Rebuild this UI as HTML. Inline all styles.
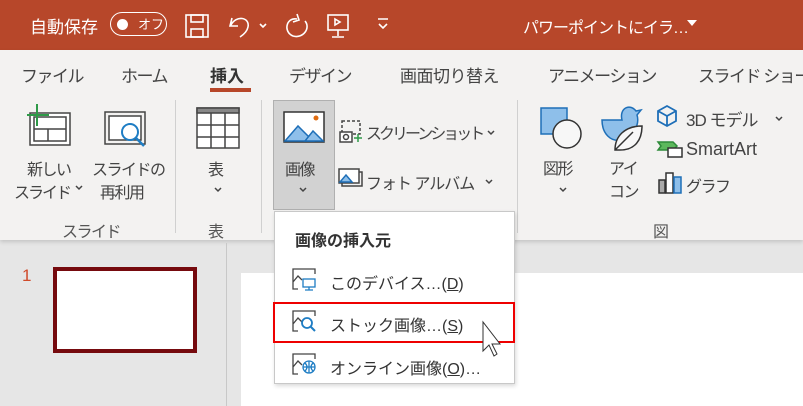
<!DOCTYPE html>
<html><head><meta charset="utf-8"><style>
*{margin:0;padding:0;box-sizing:border-box}
body{width:803px;height:406px;overflow:hidden;position:relative;background:#e6e6e6;font-family:"Liberation Sans","Noto Sans CJK JP",sans-serif;color:#333}
.a{position:absolute;white-space:nowrap}
.t{font-size:16px;color:#444;letter-spacing:-1.5px}
.w{color:#fff}
svg{position:absolute;overflow:visible}
</style></head><body>
<div class="a" style="left:0;top:0;width:803px;height:50px;background:#b7472a"></div>
<div class="a w" style="left:30px;top:13px;font-size:17px">自動保存</div>
<div class="a" style="left:110px;top:12px;width:57px;height:24px;border:1.5px solid #fff;border-radius:12px"></div>
<div class="a" style="left:117px;top:19px;width:11px;height:11px;border-radius:50%;background:#fff"></div>
<div class="a w" style="left:138px;top:14px;font-size:13px">オフ</div>
<svg width="803" height="50" style="left:0;top:0" fill="none" stroke="#fff" stroke-width="1.6">
<rect x="186" y="15" width="22" height="22"/><rect x="191" y="15" width="12" height="7"/><rect x="191" y="29" width="12" height="8"/>
<path d="M232 18 L230 26 L238 26 M231 25 C236 15 250 17 248 27 C247 32 243 35 240 37"/><path d="M260 24 l3 3 l3 -3"/>
<path d="M297 19 C286 17 283 32 293 36 C303 39 311 28 305 21 M297 14 l2 6 l-6 2"/>
<rect x="328" y="15" width="20" height="15"/><path d="M338 30 v6 M332 37 h12 M335 19 l5 3 l-5 3z"/>
<path d="M378 19 h10 M379 24 l4 4 l4 -4"/>
<path d="M687 20 h10 l-5 6z" fill="#fff" stroke="none"/>
</svg>
<div class="a w" style="left:523px;top:14px;font-size:16px;letter-spacing:-1px">パワーポイントにイラ…</div>

<div class="a" style="left:0;top:50px;width:803px;height:190px;background:#f3f2f1;box-shadow:0 2px 4px rgba(0,0,0,.15)"></div>
<div class="a t" style="left:21px;top:62px;font-size:17px">ファイル</div>
<div class="a t" style="left:121px;top:62px;font-size:17px">ホーム</div>
<div class="a t" style="left:210px;top:62px;font-weight:bold;color:#333;font-size:17px;letter-spacing:0">挿入</div>
<div class="a" style="left:210px;top:88px;width:41px;height:4px;background:#b7472a"></div>
<div class="a t" style="left:289px;top:62px;font-size:17px">デザイン</div>
<div class="a t" style="left:400px;top:62px;font-size:17px;letter-spacing:-0.5px">画面切り替え</div>
<div class="a t" style="left:548px;top:62px;font-size:17px">アニメーション</div>
<div class="a t" style="left:698px;top:62px;font-size:17px">スライド ショー</div>

<div class="a" style="left:175px;top:100px;width:1px;height:133px;background:#d0d0d0"></div>
<div class="a" style="left:261px;top:100px;width:1px;height:133px;background:#d0d0d0"></div>
<div class="a" style="left:517px;top:100px;width:1px;height:133px;background:#d0d0d0"></div>
<div class="a" style="left:273px;top:100px;width:62px;height:110px;background:#d2d2d2;border:1px solid #b0b0b0"></div>

<svg width="803" height="240" style="left:0;top:0" fill="none" stroke-width="1.5">
<rect x="30" y="113" width="40" height="32" stroke="#444" fill="#fff"/><rect x="34" y="117" width="32" height="24" stroke="#444"/><path d="M34 129 h32 M48 129 v12" stroke="#444"/>
<path d="M37 104 v22 M27 115 h22" stroke="#2e9a48" stroke-width="2"/>
<rect x="105" y="112" width="40" height="32" stroke="#444"/><rect x="109" y="116" width="32" height="24" stroke="#444" fill="#fff"/><circle cx="130" cy="132" r="8" stroke="#1e7dc4" stroke-width="2"/><path d="M136 138 l8 8" stroke="#1e7dc4" stroke-width="2.5"/>
<rect x="197" y="108" width="42" height="40" stroke="#444" fill="#fff"/><rect x="197" y="108" width="42" height="5" fill="#888" stroke="#444"/><path d="M211 113 v35 M225 113 v35 M197 125 h42 M197 137 h42" stroke="#444"/>
<rect x="284" y="112" width="40" height="30" stroke="#333" fill="#fff"/><path d="M285 141 L298 126 L313 141z" fill="#8ebfea" stroke="#1e6fb8"/><path d="M305 141 L313 131 L323 141z" fill="#8ebfea" stroke="#1e6fb8"/><circle cx="316" cy="118" r="2.5" fill="#e06c10" stroke="none"/>
<rect x="342" y="121" width="18" height="13" stroke="#444" stroke-dasharray="3 2"/><rect x="340" y="132" width="12" height="10" stroke="#444" fill="#fff"/><circle cx="346" cy="137" r="2.5" stroke="#444"/><path d="M358 134 v8 M354 138 h8" stroke="#2e9a48"/>
<rect x="342" y="172" width="20" height="14" stroke="#444"/><rect x="339" y="169" width="20" height="14" stroke="#444" fill="#fff"/><path d="M340 182 l6 -7 l6 7z" fill="#8ebfea" stroke="#1e6fb8"/>
<rect x="541" y="108" width="26" height="26" fill="#8ebfea" stroke="#1e6fb8"/><circle cx="567" cy="134" r="14" fill="#f7f7f7" stroke="#333"/>
<path d="M602 120 h20 c-3 -12 8 -17 14 -9 l5 -1 l-4 5 c2 6 0 16 -8 21 l-8 4 c-10 2 -19 -6 -19 -20z" fill="#8ebfea" stroke="#1e6fb8"/>
<path d="M615 150 c0 -14 10 -24 27 -24 c0 14 -7 24 -22 24z M615 150 l18 -18" fill="#f7f7f7" stroke="#333"/>
<path d="M667 106 l9 5 v10 l-9 5 l-9 -5 v-10z M658 111 l9 5 l9 -5 M667 116 v10" stroke="#1e6fb8" stroke-width="1.8"/>
<path d="M658 142 h15 l4 4 l-4 4 h-15 l3 -4z" fill="#5cb85c" stroke="#2e8b3a"/><rect x="668" y="148" width="14" height="9" fill="#fff" stroke="#333"/>
<rect x="659" y="180" width="6" height="13" fill="#aaa" stroke="#333"/><rect x="666" y="173" width="7" height="20" fill="#fff" stroke="#333"/><rect x="674" y="177" width="7" height="16" fill="#8ebfea" stroke="#1e6fb8"/>
<path d="M76 186 l3 3 l3 -3 M215 188 l3 3 l3 -3 M300 188 l3 3 l3 -3 M488 131 l3 3 l3 -3 M486 180 l3 3 l3 -3 M560 188 l3 3 l3 -3 M776 117 l3 3 l3 -3" stroke="#444"/>
</svg>
<div class="a t" style="left:27px;top:156px">新しい</div>
<div class="a t" style="left:14px;top:179px;letter-spacing:-2px">スライド</div>
<div class="a t" style="left:92px;top:156px">スライドの</div>
<div class="a t" style="left:100px;top:179px">再利用</div>
<div class="a t" style="left:208px;top:156px">表</div>
<div class="a t" style="left:285px;top:156px">画像</div>
<div class="a t" style="left:366px;top:120px;letter-spacing:-3px">スクリーンショット</div>
<div class="a t" style="left:366px;top:170px;letter-spacing:-1px">フォト アルバム</div>
<div class="a t" style="left:543px;top:155px">図形</div>
<div class="a t" style="left:609px;top:155px">アイ</div>
<div class="a t" style="left:609px;top:178px">コン</div>
<div class="a t" style="left:686px;top:106px;font-size:17px;letter-spacing:-1px">3D モデル</div>
<div class="a t" style="left:686px;top:139px;font-size:18px;letter-spacing:0">SmartArt</div>
<div class="a t" style="left:686px;top:173px">グラフ</div>
<div class="a t" style="left:62px;top:218px;color:#555">スライド</div>
<div class="a t" style="left:208px;top:218px;color:#555">表</div>
<div class="a t" style="left:653px;top:218px;color:#555">図</div>

<div class="a" style="left:226px;top:243px;width:1px;height:163px;background:#c8c8c8"></div>
<div class="a" style="left:241px;top:273px;width:562px;height:133px;background:#fff"></div>
<div class="a" style="left:22px;top:266px;font-size:17px;color:#d04a2a">1</div>
<div class="a" style="left:53px;top:267px;width:144px;height:86px;border:4px solid #760a0e;background:#fff"></div>

<div class="a" style="left:274px;top:211px;width:241px;height:173px;background:#fff;border:1px solid #c8c8c8;box-shadow:1px 2px 4px rgba(0,0,0,.15)"></div>
<div class="a" style="left:295px;top:227px;font-size:16px;font-weight:bold;color:#333">画像の挿入元</div>
<div class="a" style="left:273px;top:302px;width:242px;height:41px;border:2px solid #e00"></div>
<svg width="803" height="406" style="left:0;top:0" fill="none" stroke-width="1.3">
<g stroke="#444"><path d="M298 289 h-5 v-20 h22 v5 M293 282 l5 -6 l4 4"/><path d="M298 331 h-5 v-20 h22 v5 M293 324 l5 -6 l4 4"/><path d="M298 374 h-5 v-20 h22 v5 M293 367 l5 -6 l4 4"/></g>
<rect x="303" y="279" width="12" height="8" stroke="#1e7dc4"/><path d="M309 287 v3 M305 290 h8" stroke="#1e7dc4"/>
<circle cx="307" cy="323" r="5" stroke="#1e7dc4" stroke-width="1.8"/><path d="M311 327 l4 4" stroke="#1e7dc4" stroke-width="2"/>
<circle cx="309" cy="367" r="6" stroke="#1e7dc4"/><path d="M303 367 h12 M309 361 v12 M305 363 q4 4 0 8 M313 363 q-4 4 0 8" stroke="#1e7dc4"/>
<path d="M483 322 v29 l6 -6 l5 11 l3 -2 l-5 -10 h8z" fill="#fff" stroke="#333" stroke-width="1"/>
</svg>
<div class="a" style="left:330px;top:270px;font-size:16px;color:#333">このデバイス…(<u>D</u>)</div>
<div class="a" style="left:330px;top:312px;font-size:16px;color:#333">ストック画像…(<u>S</u>)</div>
<div class="a" style="left:330px;top:355px;font-size:16px;color:#333">オンライン画像(<u>O</u>)…</div>
</body></html>
